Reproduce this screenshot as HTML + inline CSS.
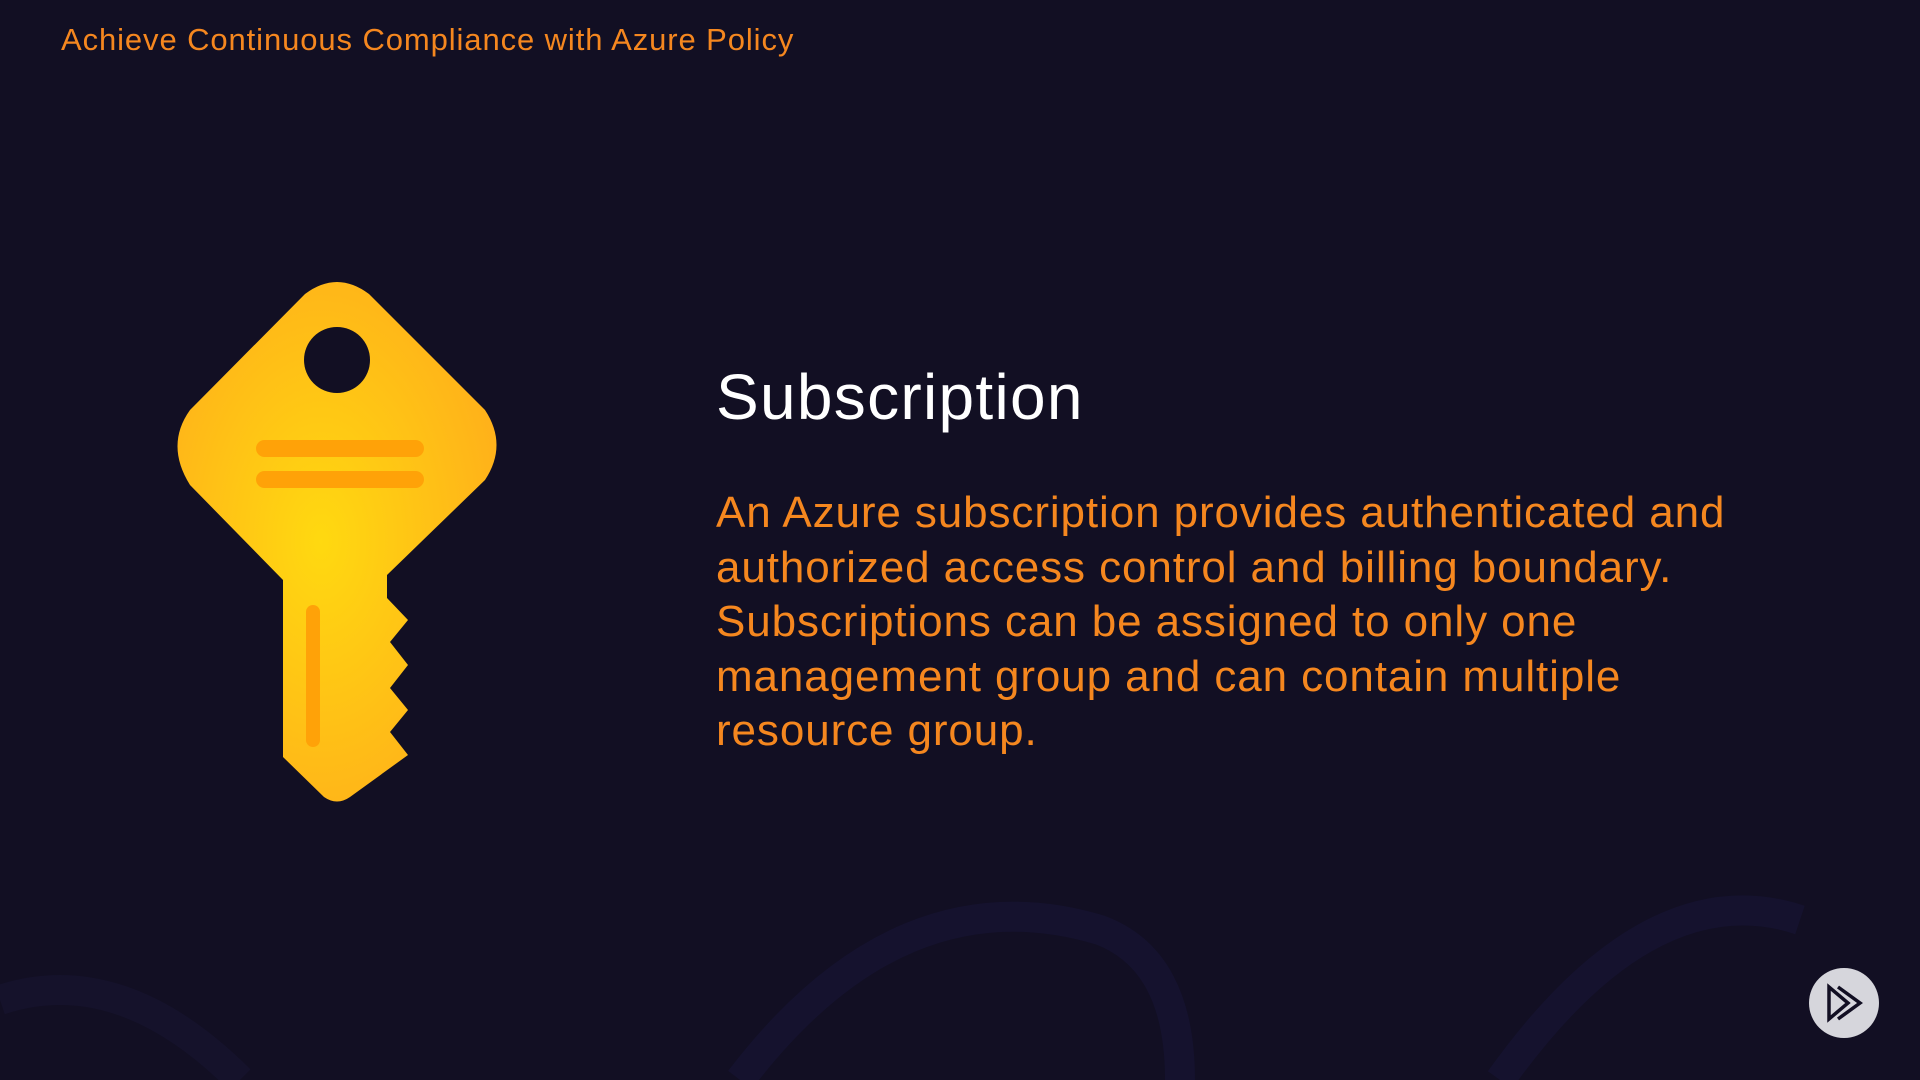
<!DOCTYPE html>
<html><head><meta charset="utf-8"><style>
html,body{margin:0;padding:0}
body{width:1920px;height:1080px;overflow:hidden;background:#120f23;position:relative;font-family:"Liberation Sans",sans-serif}
.hdr{position:absolute;left:61px;top:22px;color:#f5871f;font-size:31px;letter-spacing:0.9px}
.title{position:absolute;left:716px;top:360px;color:#fff;font-size:64px;letter-spacing:1.3px}
.body{position:absolute;left:716px;top:486px;width:1200px;color:#f5871f;font-size:44px;line-height:54.5px;letter-spacing:0.9px}
</style></head><body>
<svg width="1920" height="1080" style="position:absolute;left:0;top:0">
<defs>
<radialGradient id="g" cx="0.45" cy="0.5" r="0.6">
<stop offset="0" stop-color="#ffd910"/><stop offset="1" stop-color="#ffb01a"/></radialGradient>
</defs>
<path d="M0 1000 Q120 960 240 1080" stroke="#15122b" stroke-width="30" fill="none"/>
<path d="M740 1080 Q900 870 1100 930 Q1180 960 1180 1080" stroke="#15122e" stroke-width="30" fill="none"/>
<path d="M1500 1080 Q1650 870 1800 920" stroke="#15122e" stroke-width="30" fill="none"/>
<path d="M305 294 Q337 270 369 294 L485 410 Q508 445 485 480 L387 575 L387 598 L408 620 L390 642 L408 665 L390 688 L408 710 L390 732 L408 755 L350 797 Q337 806 324 797 L283 757 L283 580 L190 485 Q165 445 190 410 Z" fill="url(#g)"/>
<circle cx="337" cy="360" r="33" fill="#120f23"/>
<rect x="256" y="440" width="168" height="17" rx="8.5" fill="#ffa208"/>
<rect x="256" y="471" width="168" height="17" rx="8.5" fill="#ffa208"/>
<rect x="306" y="605" width="14" height="142" rx="7" fill="#ffa208"/>
<circle cx="1844" cy="1003" r="35" fill="#d6d6dc"/>
<path d="M1829 987 V1019 L1848 1003 Z M1838 987 L1860 1003 L1838 1019" stroke="#120f23" stroke-width="3.5" fill="none" stroke-linejoin="miter"/>
</svg>
<div class="hdr">Achieve Continuous Compliance with Azure Policy</div>
<div class="title">Subscription</div>
<div class="body">An Azure subscription provides authenticated and<br>authorized access control and billing boundary.<br>Subscriptions can be assigned to only one<br>management group and can contain multiple<br>resource group.</div>
</body></html>
